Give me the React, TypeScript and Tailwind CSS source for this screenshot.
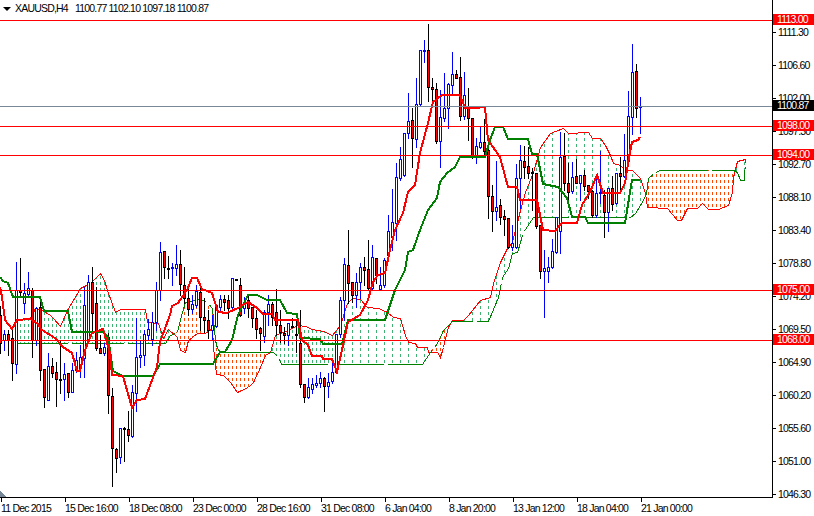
// XAUUSD H4 chart, terminal look: candles, ichimoku cloud, support/resistance levels.
type Bar = [number, number, number, number, number, number];
type Pt = [number, number];

// x, high, body top, body bottom, low, bullish (all in pixels)
const bars: Bar[] = [
  [0, 306, 315, 343, 353, 0], [4, 330, 334, 340, 350, 1], [8, 330, 334, 340, 355, 0], [12, 330, 338, 363, 380, 0],
  [16, 262, 290, 364, 373, 1], [20, 258, 290, 292, 295, 0], [24, 283, 293, 303, 313, 1], [28, 272, 288, 294, 295, 1],
  [32, 288, 290, 340, 357, 0], [36, 307, 308, 340, 345, 1], [40, 300, 307, 370, 380, 0], [44, 369, 369, 397, 407, 0],
  [48, 353, 366, 400, 400, 1], [52, 358, 366, 373, 377, 0], [56, 362, 372, 379, 406, 0], [60, 340, 379, 380, 393, 0],
  [64, 363, 374, 379, 400, 1], [68, 373, 373, 392, 397, 0], [72, 363, 370, 392, 392, 1], [76, 352, 360, 370, 372, 1],
  [80, 345, 357, 368, 377, 1], [84, 287, 305, 358, 377, 1], [88, 275, 282, 340, 342, 1], [92, 267, 282, 313, 330, 0],
  [96, 287, 303, 348, 350, 0], [100, 335, 348, 353, 353, 0], [104, 343, 347, 353, 355, 1], [108, 333, 337, 395, 413, 0],
  [112, 388, 396, 448, 486, 0], [116, 448, 449, 458, 472, 0], [120, 428, 428, 457, 463, 1], [124, 427, 428, 429, 461, 0],
  [128, 411, 429, 435, 441, 0], [132, 385, 392, 436, 437, 1], [136, 318, 357, 393, 411, 1], [140, 340, 355, 357, 367, 1],
  [144, 330, 334, 355, 365, 1], [148, 319, 329, 335, 340, 1], [152, 312, 322, 339, 345, 1], [156, 282, 290, 322, 330, 1],
  [160, 242, 252, 290, 300, 1], [164, 251, 251, 267, 278, 0], [168, 256, 268, 269, 278, 0], [172, 263, 267, 268, 285, 1],
  [176, 245, 264, 268, 275, 1], [180, 250, 264, 284, 295, 0], [184, 267, 285, 298, 303, 0], [188, 285, 298, 309, 315, 0],
  [192, 295, 304, 309, 313, 1], [196, 285, 291, 305, 307, 1], [200, 288, 292, 317, 330, 0], [204, 298, 317, 320, 332, 0],
  [208, 310, 320, 330, 338, 0], [212, 315, 325, 330, 340, 1], [216, 305, 305, 326, 327, 1], [220, 295, 299, 307, 310, 1],
  [224, 295, 299, 302, 310, 0], [228, 295, 300, 308, 318, 0], [232, 278, 278, 307, 308, 1], [236, 279, 279, 280, 280, 0],
  [240, 278, 285, 315, 316, 0], [244, 297, 302, 308, 313, 1], [248, 295, 300, 308, 317, 0], [252, 307, 307, 318, 327, 0],
  [256, 310, 318, 329, 338, 0], [260, 327, 328, 333, 350, 0], [264, 310, 312, 336, 342, 1], [268, 295, 304, 312, 325, 1],
  [272, 302, 304, 317, 325, 0], [276, 289, 312, 325, 335, 0], [280, 310, 325, 332, 342, 0], [284, 327, 333, 335, 343, 0],
  [288, 323, 323, 335, 345, 1], [292, 318, 326, 327, 327, 0], [296, 320, 334, 335, 352, 0], [300, 310, 343, 384, 387, 0],
  [304, 384, 384, 397, 402, 0], [308, 378, 387, 397, 398, 1], [312, 378, 384, 389, 393, 1], [316, 375, 383, 385, 387, 1],
  [320, 372, 378, 383, 387, 1], [324, 377, 378, 386, 411, 0], [328, 373, 382, 386, 397, 1], [332, 363, 372, 381, 383, 1],
  [336, 334, 334, 372, 373, 1], [340, 297, 300, 334, 337, 1], [344, 258, 264, 300, 320, 1], [348, 230, 265, 283, 303, 0],
  [352, 282, 282, 295, 302, 0], [356, 273, 282, 295, 307, 1], [360, 263, 267, 282, 298, 1], [364, 257, 267, 270, 285, 0],
  [368, 240, 269, 288, 290, 0], [372, 245, 257, 288, 290, 1], [376, 258, 258, 275, 283, 0], [380, 267, 285, 289, 290, 1],
  [384, 258, 260, 285, 287, 1], [388, 215, 231, 255, 257, 1], [392, 189, 222, 237, 250, 1], [396, 163, 177, 223, 240, 1],
  [400, 147, 159, 178, 180, 1], [404, 133, 133, 175, 176, 1], [408, 93, 121, 133, 138, 1], [412, 108, 120, 138, 167, 0],
  [416, 78, 104, 139, 147, 1], [420, 50, 50, 104, 105, 1], [424, 40, 50, 51, 62, 1], [428, 24, 50, 87, 101, 0],
  [432, 78, 87, 89, 100, 0], [436, 83, 89, 141, 143, 0], [440, 90, 117, 141, 167, 1], [444, 73, 108, 118, 121, 1],
  [448, 83, 84, 108, 128, 1], [452, 52, 74, 85, 93, 1], [456, 70, 74, 78, 78, 0], [460, 57, 77, 116, 120, 0],
  [464, 72, 95, 116, 119, 1], [468, 88, 107, 118, 140, 0], [472, 118, 118, 155, 158, 0], [476, 138, 146, 155, 163, 1],
  [480, 127, 142, 147, 148, 1], [484, 119, 142, 151, 157, 0], [488, 140, 150, 196, 218, 0], [492, 185, 196, 211, 231, 0],
  [496, 161, 207, 211, 220, 1], [500, 199, 205, 217, 224, 0], [504, 210, 216, 219, 235, 0], [508, 218, 218, 247, 248, 0],
  [512, 225, 243, 247, 250, 1], [516, 164, 178, 247, 248, 1], [520, 145, 160, 178, 208, 1], [524, 146, 161, 167, 178, 0],
  [528, 147, 166, 173, 178, 0], [532, 168, 172, 173, 210, 0], [536, 173, 173, 226, 228, 0], [540, 225, 225, 271, 278, 0],
  [544, 250, 268, 271, 317, 1], [548, 257, 267, 271, 282, 1], [552, 239, 251, 267, 268, 1], [556, 217, 217, 252, 253, 1],
  [560, 132, 157, 231, 253, 1], [564, 133, 156, 183, 190, 0], [568, 163, 183, 192, 200, 0], [572, 162, 177, 191, 193, 1],
  [576, 159, 176, 183, 183, 0], [580, 175, 175, 183, 200, 1], [584, 170, 175, 186, 190, 0], [588, 185, 185, 191, 198, 0],
  [592, 190, 191, 215, 217, 0], [596, 175, 193, 215, 217, 1], [600, 151, 192, 193, 203, 1], [604, 190, 195, 212, 237, 0],
  [608, 188, 188, 212, 231, 1], [612, 176, 188, 204, 210, 0], [616, 173, 173, 203, 204, 1], [620, 157, 173, 176, 193, 0],
  [624, 134, 160, 176, 177, 1], [628, 91, 116, 161, 162, 1], [632, 44, 72, 117, 134, 1], [636, 64, 71, 108, 117, 0],
  [640, 97, 106, 107, 133, 1],
];

const tenkan: Pt[] = [
  [0, 287], [2, 297], [5, 320], [12, 329], [17, 320], [30, 319], [37, 323], [42, 330], [55, 338], [63, 347], [72, 353],
  [77, 371], [80, 371], [85, 350], [92, 333], [103, 329], [110, 353], [112, 375], [123, 376], [132, 408], [137, 400],
  [145, 399], [157, 367], [160, 342], [170, 315], [172, 306], [178, 303], [187, 290], [192, 278], [197, 278], [202, 289],
  [212, 293], [218, 312], [227, 313], [238, 308], [248, 302], [257, 308], [263, 314], [272, 314], [275, 320], [298, 320],
  [302, 340], [308, 345], [312, 356], [322, 356], [323, 359], [332, 359], [337, 372], [342, 350], [348, 322], [360, 315],
  [368, 300], [373, 282], [378, 275], [385, 273], [390, 250], [395, 230], [403, 213], [408, 192], [415, 185], [420, 153],
  [428, 123], [433, 102], [442, 95], [460, 95], [465, 108], [475, 108], [485, 107], [488, 140], [500, 157], [508, 187],
  [517, 187], [520, 200], [537, 200], [543, 230], [555, 231], [562, 223], [577, 223], [582, 205], [590, 192], [597, 175],
  [603, 193], [620, 193], [625, 183], [629, 157], [632, 142], [638, 140], [640, 137],
];

const kijun: Pt[] = [
  [0, 277], [3, 281], [8, 283], [13, 297], [40, 297], [44, 311], [68, 311], [72, 332], [103, 332], [108, 337], [113, 371],
  [123, 376], [153, 376], [160, 364], [213, 364], [220, 352], [225, 352], [232, 340], [238, 315], [248, 295], [257, 295],
  [267, 300], [280, 300], [287, 313], [297, 314], [300, 338], [320, 339], [323, 344], [342, 344], [348, 320], [385, 320],
  [395, 290], [405, 270], [408, 252], [413, 250], [420, 230], [428, 210], [437, 198], [440, 182], [447, 173], [455, 167],
  [460, 157], [485, 157], [490, 140], [495, 127], [503, 127], [508, 139], [528, 139], [532, 154], [537, 154], [543, 184],
  [558, 187], [567, 198], [572, 217], [585, 217], [588, 223], [625, 223], [632, 180], [640, 180],
];

const spanA: Pt[] = [
  [12, 328], [17, 320], [30, 318], [35, 308], [42, 310], [50, 315], [53, 318], [60, 326], [68, 308], [73, 300], [80, 288],
  [90, 283], [100, 273], [104, 280], [107, 290], [115, 312], [120, 309], [145, 309], [147, 322], [158, 323], [163, 338],
  [168, 329], [177, 337], [180, 350], [185, 352], [188, 340], [197, 333], [205, 333], [212, 328], [213, 347], [216, 374],
  [223, 375], [230, 382], [237, 392], [248, 387], [253, 382], [260, 367], [265, 355], [270, 352], [275, 335], [288, 330],
  [297, 325], [305, 326], [312, 329], [323, 331], [332, 335], [340, 325], [347, 303], [352, 298], [360, 299], [367, 307],
  [378, 308], [387, 312], [393, 317], [400, 318], [405, 335], [408, 342], [415, 343], [417, 347], [427, 347], [428, 352],
  [437, 352], [440, 357], [443, 347], [448, 327], [452, 320], [463, 320], [468, 315], [480, 300], [490, 297], [493, 283],
  [500, 262], [507, 248], [512, 242], [517, 222], [520, 210], [525, 192], [533, 172], [540, 147], [550, 133], [563, 128],
  [568, 133], [588, 132], [592, 138], [600, 138], [605, 145], [610, 155], [613, 163], [620, 165], [625, 170], [632, 170],
  [640, 178], [645, 193], [647, 207], [667, 208], [677, 220], [681, 220], [687, 208], [697, 208], [702, 203], [708, 209],
  [718, 209], [728, 205], [732, 192], [733, 177], [737, 161], [745, 159],
];

const spanB: Pt[] = [
  [15, 343], [165, 343], [170, 335], [177, 332], [182, 312], [185, 302], [200, 299], [207, 302], [212, 308], [215, 340],
  [217, 348], [220, 352], [273, 352], [278, 357], [281, 364], [422, 364], [430, 352], [437, 343], [443, 330], [452, 321],
  [488, 321], [498, 297], [502, 277], [508, 268], [512, 253], [517, 252], [523, 232], [533, 217], [630, 217], [635, 213],
  [643, 200], [646, 193], [648, 178], [655, 172], [660, 170], [733, 170], [737, 172], [740, 180], [744, 180], [745, 159],
];

const levels = [
  { y: 20, color: "#ff0000" },
  { y: 106, color: "#778899" },
  { y: 126, color: "#ff0000" },
  { y: 155, color: "#ff0000" },
  { y: 290, color: "#ff0000" },
  { y: 340, color: "#ff0000" },
];

const priceTicks = [
  "1111.30", "1106.60", "1102.00", "1097.30", "1092.70", "1088.10", "1083.40", "1078.80",
  "1074.20", "1069.50", "1064.90", "1060.20", "1055.60", "1051.00", "1046.30",
];

const priceTags = [
  { y: 20, text: "1113.00", bg: "bg-[#ff0000]" },
  { y: 106, text: "1100.87", bg: "bg-black" },
  { y: 126, text: "1098.00", bg: "bg-[#ff0000]" },
  { y: 155, text: "1094.00", bg: "bg-[#ff0000]" },
  { y: 290, text: "1075.00", bg: "bg-[#ff0000]" },
  { y: 340, text: "1068.00", bg: "bg-[#ff0000]" },
];

const dateTicks = [
  "11 Dec 2015", "15 Dec 16:00", "18 Dec 08:00", "23 Dec 00:00", "28 Dec 16:00", "31 Dec 08:00",
  "6 Jan 04:00", "8 Jan 20:00", "13 Jan 12:00", "18 Jan 04:00", "21 Jan 00:00",
];

function at(line: Pt[], x: number): number | null {
  for (let i = 1; i < line.length; i++) {
    const [x0, y0] = line[i - 1];
    const [x1, y1] = line[i];
    if (x >= x0 && x <= x1 && x1 > x0) return y0 + ((y1 - y0) * (x - x0)) / (x1 - x0);
  }
  return null;
}

const toPoints = (line: Pt[]) => line.map(([x, y]) => `${x},${y}`).join(" ");

function Cloud() {
  const cols = [];
  for (let x = 12; x <= 744; x += 4) {
    const a = at(spanA, x);
    const b = at(spanB, x);
    if (a === null || b === null || Math.abs(a - b) < 2) continue;
    const green = a < b;
    // green hatching thins out to every other bar after the new year
    if (green && x >= 335 && x % 8 !== 0) continue;
    const top = Math.round(Math.min(a, b));
    const bottom = Math.round(Math.max(a, b));
    cols.push(
      <line
        key={x}
        x1={x + 0.5}
        x2={x + 0.5}
        y1={top}
        y2={bottom}
        stroke={green ? "#3cb371" : "#ff4500"}
        strokeDasharray="3 3"
        strokeDashoffset={top % 6}
      />,
    );
  }
  return <g>{cols}</g>;
}

function Candles() {
  return (
    <g>
      {bars.map(([x, high, top, bottom, low, up]) => (
        <g key={x} stroke={up ? "#0000ff" : "#000000"}>
          <line x1={x + 0.5} x2={x + 0.5} y1={high} y2={low + 1} />
          <rect
            x={x - 0.5}
            y={top + 0.5}
            width={2}
            height={Math.max(bottom - top, 1)}
            fill={up ? "#ffffff" : "#ff0000"}
          />
        </g>
      ))}
    </g>
  );
}

function Chart() {
  return (
    <svg width={772} height={497} className="block" shapeRendering="crispEdges">
      <Cloud />
      <polyline points={toPoints(spanA)} fill="none" stroke="#ff0000" transform="translate(0.5 0.5)" />
      <polyline
        points={toPoints(spanB)}
        fill="none"
        stroke="#008000"
        strokeDasharray="52 4"
        transform="translate(0.5 0.5)"
      />
      <Candles />
      <polyline points={toPoints(kijun)} fill="none" stroke="#008000" strokeWidth={2} />
      <polyline points={toPoints(tenkan)} fill="none" stroke="#ff0000" strokeWidth={2} />
      {levels.map((l) => (
        <line key={l.y} x1={0} x2={772} y1={l.y + 0.5} y2={l.y + 0.5} stroke={l.color} />
      ))}
      <polygon points="0,491 0,497 6,497" fill="#778899" />
    </svg>
  );
}

function PriceAxis() {
  return (
    <div className="relative h-full w-[41px] pt-[16px]">
      {priceTicks.map((p) => (
        <div key={p} className="flex h-[33px] items-center gap-[2px]">
          <span className="h-px w-[3px] bg-black" />
          <span>{p}</span>
        </div>
      ))}
      {priceTags.map((t) => (
        <div
          key={t.text}
          className={`absolute left-0 right-0 flex h-[11px] items-center pl-[4px] text-white ${t.bg}`}
          style={{ top: t.y - 6 }}
        >
          {t.text}
        </div>
      ))}
    </div>
  );
}

function TimeAxis() {
  return (
    <div className="flex h-[18px] pl-[1px]">
      {dateTicks.map((d) => (
        <div key={d} className="relative w-[64px] shrink-0 pt-[4px] whitespace-nowrap">
          <span className="absolute left-0 top-0 h-[4px] w-px bg-black" />
          {d}
        </div>
      ))}
    </div>
  );
}

export default function App() {
  return (
    <div className="flex h-[516px] w-[814px] flex-col overflow-hidden bg-white font-['Liberation_Sans',sans-serif] text-[10.5px] leading-[13px] tracking-[-0.8px] text-black">
      <div className="flex h-[498px]">
        <div className="relative h-full w-[773px] border-r border-b border-black">
          <Chart />
          <div className="absolute left-[3px] top-[2px] flex items-center whitespace-nowrap">
            <span className="mr-[4px] h-0 w-0 border-x-[4px] border-t-[4px] border-x-transparent border-t-black" />
            <span>XAUUSD,H4</span>
            <span className="ml-[7px]">1100.77 1102.10 1097.18 1100.87</span>
          </div>
        </div>
        <PriceAxis />
      </div>
      <TimeAxis />
    </div>
  );
}
